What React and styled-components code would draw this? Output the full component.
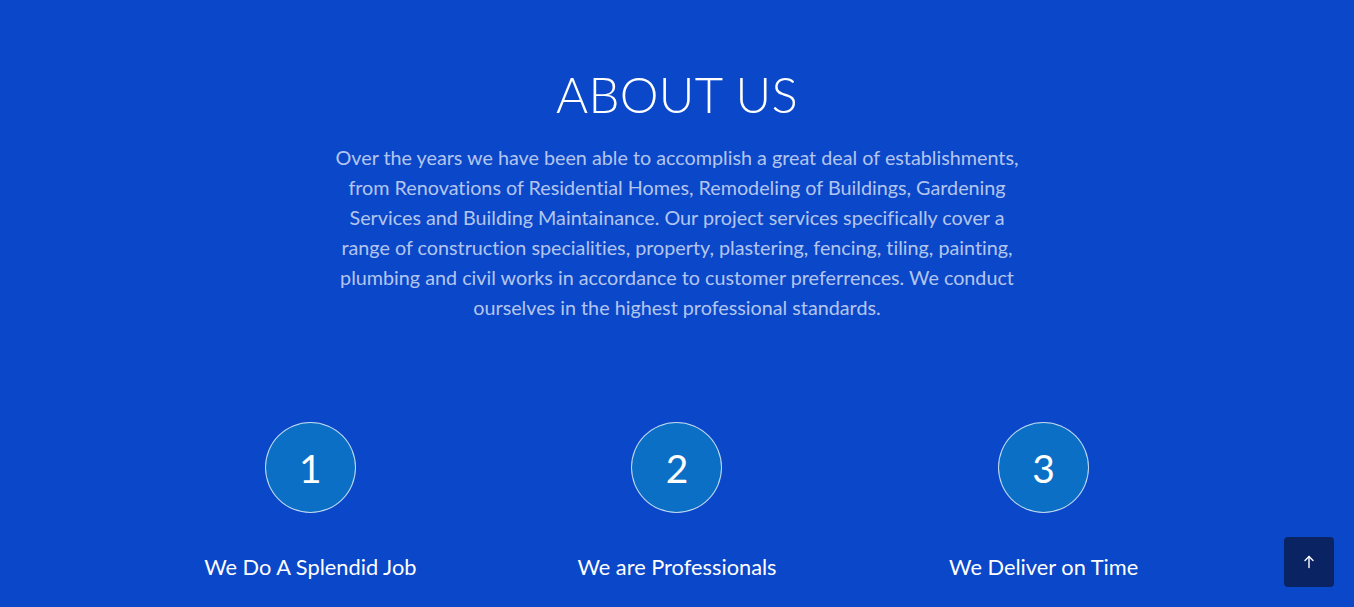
import React from 'react';
import styled, { createGlobalStyle } from 'styled-components';

const GlobalStyle = createGlobalStyle`
    body {
        margin: 0;
        background: #0a47c9;
        font-family: Lato, "Open Sans", sans-serif;
        font-variant-ligatures: none;
    }
`

const features = [
    { num: 1, title: 'We Do A Splendid Job' },
    { num: 2, title: 'We are Professionals' },
    { num: 3, title: 'We Deliver on Time' },
];

function App(){
    return (
        <>
            <GlobalStyle />
            <Section>
                <Title>ABOUT US</Title>
                <Text>
                    Over the years we have been able to accomplish a great deal of establishments, from Renovations of Residential Homes, Remodeling of Buildings, Gardening Services and Building Maintainance. Our project services specifically cover a range of construction specialities, property, plastering, fencing, tiling, painting, plumbing and civil works in accordance to customer preferrences. We conduct ourselves in the highest professional standards.
                </Text>
                <Features>
                    {features.map(f => (
                        <Feature key={f.num}>
                            <Circle>{f.num}</Circle>
                            <FeatureTitle>{f.title}</FeatureTitle>
                        </Feature>
                    ))}
                </Features>
            </Section>
            <TopButton aria-label="Back to top">
                <svg width="14" height="14" viewBox="0 0 14 14" fill="none" stroke="#fff" strokeWidth="1.4" strokeLinecap="round">
                    <path d="M7 12.5V1.8" />
                    <path d="M3 5.6L7 1.6l4 4" />
                </svg>
            </TopButton>
        </>
    )
}

const Section = styled.section`
    min-height: 607px;
    padding-top: 63px;
    box-sizing: border-box;
    display: flex;
    flex-direction: column;
    align-items: center;
    color: #fff;
`

const Title = styled.h2`
    margin: 0;
    font-family: Lato, sans-serif;
    font-weight: 300;
    font-size: 49px;
    line-height: 62px;
    letter-spacing: 0.3px;
`

const Text = styled.p`
    margin: 18px 0 0;
    width: 690px;
    text-align: center;
    font-size: 19.75px;
    line-height: 30px;
    color: rgba(255, 255, 255, 0.7);
`

const Features = styled.div`
    margin-top: 99px;
    width: 1100px;
    display: grid;
    grid-template-columns: repeat(3, 1fr);
`

const Feature = styled.div`
    display: flex;
    flex-direction: column;
    align-items: center;
`

const Circle = styled.div`
    width: 91px;
    height: 91px;
    box-sizing: border-box;
    border-radius: 50%;
    border: 1px solid rgba(255, 255, 255, 0.75);
    background: #0a6fc5;
    display: flex;
    align-items: center;
    justify-content: center;
    font-family: Lato, sans-serif;
    font-size: 39px;
    font-weight: 400;
`

const FeatureTitle = styled.h3`
    margin: 39px 0 0;
    font-size: 21.8px;
    font-weight: 400;
    line-height: 30px;
`

const TopButton = styled.button`
    position: fixed;
    right: 20px;
    bottom: 20px;
    width: 50px;
    height: 50px;
    border: none;
    border-radius: 4px;
    background: #0a2463;
    display: flex;
    align-items: center;
    justify-content: center;
    cursor: pointer;
    padding: 0;
`

export default App;
